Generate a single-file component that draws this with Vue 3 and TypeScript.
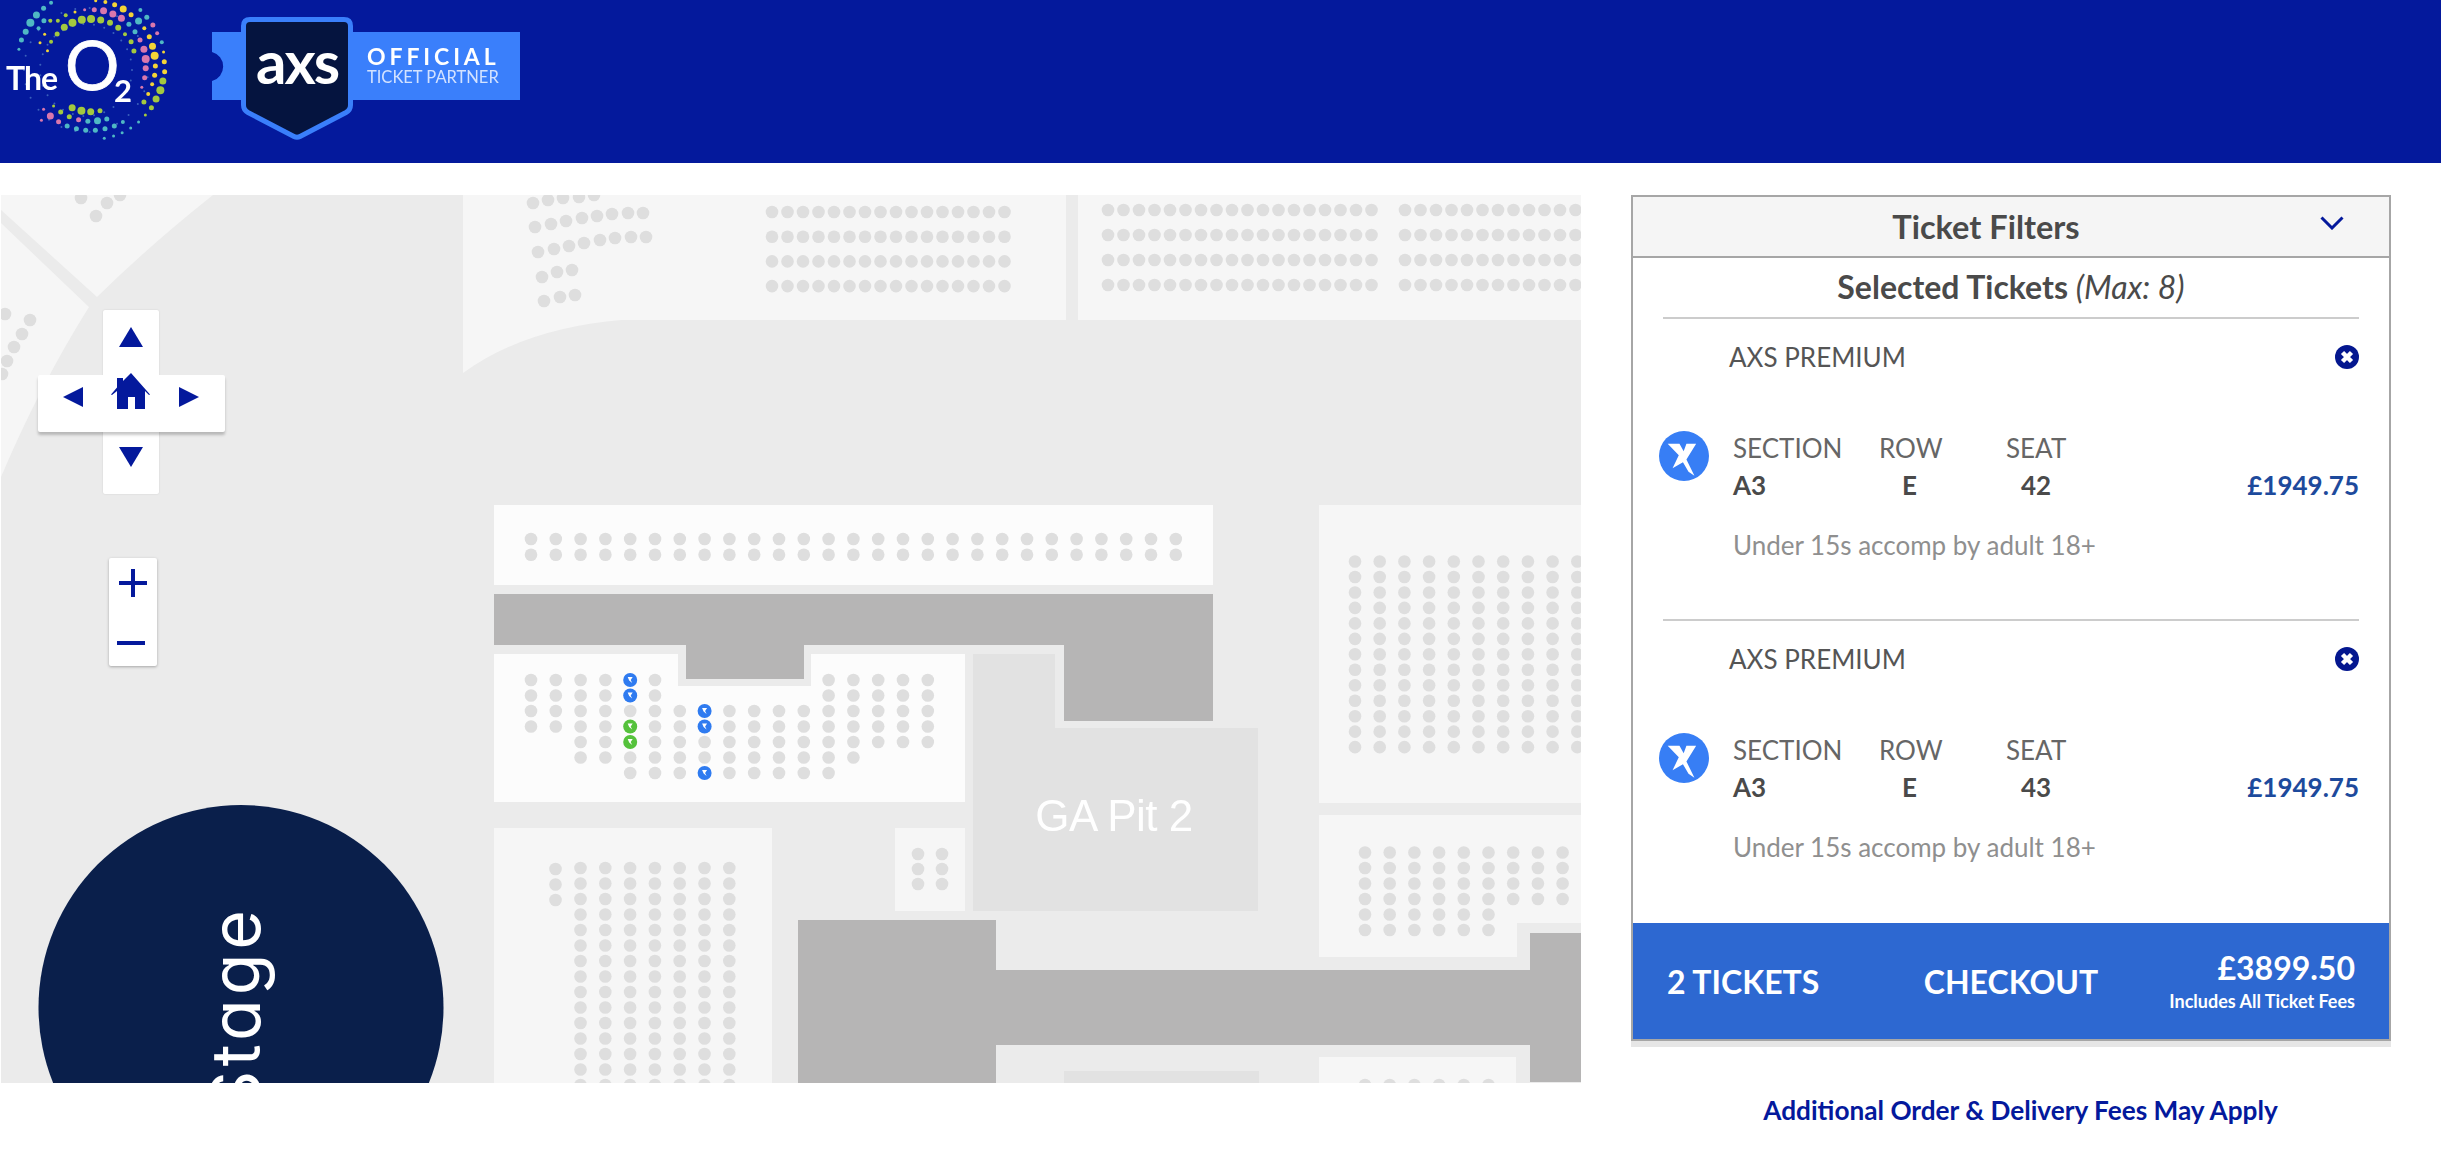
<template>
  <div class="page">
    <header class="topbar">
      <svg class="logo-o2" width="175" height="163" viewBox="0 0 175 163">
        <circle v-for="(d, i) in faintDots" :key="'f' + i" :cx="d.x" :cy="d.y" r="1" fill="#5f8fd0" opacity="0.6" />
        <circle v-for="(d, i) in logoDots" :key="i" :cx="d.x" :cy="d.y" :r="d.r" :fill="d.color" />
        <text x="6" y="90" class="o2-the">The</text>
        <text x="65" y="90" class="o2-big">O</text>
        <text x="114" y="102" class="o2-sub">2</text>
      </svg>
      <svg class="logo-axs" width="320" height="163" viewBox="205 0 320 163">
        <path d="M212 32H520V100H212V81A15 15 0 0 0 212 52Z" fill="#3a7ffb" />
        <path d="M250 19.500H344Q350.500 19.500 350.500 26V105Q350.500 110 346 112.500L300 136.500Q297 138 294 136.500L248 112.500Q243.500 110 243.500 105V26Q243.500 19.500 250 19.500Z" fill="#05143f" stroke="#3a7ffb" stroke-width="5" />
        <text x="256" y="84" class="axs-word">axs</text>
        <text x="367" y="65" class="axs-official">OFFICIAL</text>
        <text x="367" y="83" class="axs-partner">TICKET PARTNER</text>
      </svg>
    </header>

    <main class="content">
      <section class="map">
        <svg class="map-canvas" width="1581" height="888" viewBox="1 195 1581 888">
          <rect x="1" y="195" width="1581" height="888" fill="#ebebeb" />

          <path d="M1 195H213Q150 245 97 297L1 210Z" fill="#f6f6f6" />
          <path d="M1 223L89 307Q40 385 1 477Z" fill="#f6f6f6" />
          <path d="M463 195H1066V320H622Q525 328 463 373Z" fill="#f6f6f6" />
          <rect x="1078" y="195" width="504" height="125" fill="#f6f6f6" />
          <rect x="494" y="505" width="719" height="80" fill="#fcfcfc" />
          <path d="M494 654H678V686H811V654H965V802H494Z" fill="#fcfcfc" />
          <rect x="494" y="828" width="278" height="255" fill="#f6f6f6" />
          <rect x="895" y="828" width="70" height="83" fill="#f6f6f6" />
          <rect x="1319" y="505" width="263" height="298" fill="#f6f6f6" />
          <path d="M1319 815H1582V923H1517V957H1319Z" fill="#f6f6f6" />
          <rect x="1319" y="1057" width="197" height="26" fill="#f6f6f6" />

          <path d="M973 654H1055V728H1258V911H973Z" fill="#e2e2e2" />
          <rect x="1064" y="1071" width="195" height="12" fill="#e2e2e2" />

          <path d="M494 594H1213V721H1064V645H804V679H686V645H494Z" fill="#b6b5b5" />
          <path d="M798 920H996V970H1530V933H1582V1082H1530V1045H996V1083H798Z" fill="#b6b5b5" />

          <g class="soft">
            <circle v-for="(s, i) in seats" :key="i" :cx="s.x" :cy="s.y" r="6.300" fill="#dedede" />
            <g v-for="(s, i) in markedSeats" :key="'m' + i">
              <circle :cx="s.x" :cy="s.y" r="7" :fill="s.color" />
              <path :d="`M${s.x - 2.500} ${s.y - 3}h5l-2 3 1.500 3-3-2.500z`" fill="#fff" />
            </g>
            <text x="1114" y="831" text-anchor="middle" class="ga-label">GA Pit 2</text>
          </g>

          <circle cx="241" cy="1007.500" r="202.500" fill="#0a1f4b" />
          <text transform="translate(260 906) rotate(-90)" text-anchor="end" class="stage-label">Stage</text>
        </svg>

        <div class="nav-pad">
          <div class="arm-v"></div>
          <div class="arm-h"></div>
          <svg class="nav-icons" width="187" height="184" viewBox="38 310 187 184">
            <path d="M131 327L143 347H119Z" />
            <path d="M131 467L119 447H143Z" />
            <path d="M63 397L83 387V407Z" />
            <path d="M199 397L179 387V407Z" />
            <path d="M131 373L150 394.500L149 395L145 391V409H135V397H128V409H117V391L112 395L111 394.500L117 387.500V378H123V381Z" />
          </svg>
        </div>

        <div class="zoom-box">
          <svg width="48" height="108" viewBox="109 558 48 108">
            <path d="M131 569h4v12h12v4h-12v12h-4v-12h-12v-4h12z" />
            <rect x="117" y="641" width="28" height="4" />
          </svg>
        </div>
      </section>

      <aside class="side">
        <div class="panel">
          <div class="filters">
            <span>Ticket Filters</span>
            <svg class="chevron" width="24" height="14" viewBox="0 0 24 14">
              <path d="M1.500 1.500L12 12L22.500 1.500" fill="none" stroke="#04199c" stroke-width="3" />
            </svg>
          </div>
          <h2 class="selected-title">Selected Tickets <em>(Max: 8)</em></h2>

          <div v-for="t in tickets" :key="t.seat" class="ticket">
            <div class="ticket-top">
              <span class="ticket-type">AXS PREMIUM</span>
              <svg width="24" height="24" viewBox="0 0 24 24">
                <circle cx="12" cy="12" r="12" fill="#04178f" />
                <path d="M7.500 7.500L16.500 16.500M16.500 7.500L7.500 16.500" stroke="#fff" stroke-width="4.500" />
              </svg>
            </div>
            <div class="ticket-body">
              <svg class="axs-mark" width="50" height="50" viewBox="33 18 144 144">
                <circle cx="105" cy="90" r="72" fill="#377ef5" />
                <path d="M58 55H92L104 76L112 55H140L112 100L135 147L118 135L102 108L72 125L90 88Z" fill="#fff" />
              </svg>
              <div class="col col-section">
                <span class="col-label">SECTION</span>
                <strong>{{ t.section }}</strong>
              </div>
              <div class="col col-row">
                <span class="col-label">ROW</span>
                <strong>{{ t.row }}</strong>
              </div>
              <div class="col col-seat">
                <span class="col-label">SEAT</span>
                <strong>{{ t.seat }}</strong>
              </div>
              <div class="price">{{ t.price }}</div>
            </div>
            <p class="ticket-note">Under 15s accomp by adult 18+</p>
          </div>

          <div class="checkout">
            <span class="checkout-count">2 TICKETS</span>
            <span class="checkout-label">CHECKOUT</span>
            <div class="checkout-total">
              <span class="total-price">£3899.50</span>
              <span class="total-note">Includes All Ticket Fees</span>
            </div>
          </div>
        </div>
        <p class="fees-note">Additional Order &amp; Delivery Fees May Apply</p>
      </aside>
    </main>
  </div>
</template>

<script setup lang="ts">
interface Seat {
  x: number;
  y: number;
}

const tickets = [
  { section: 'A3', row: 'E', seat: '42', price: '£1949.75' },
  { section: 'A3', row: 'E', seat: '43', price: '£1949.75' },
];

const BLUE = '#2f7bf0';
const GREEN = '#55c23c';

const grid = (x0: number, y0: number, dx: number, dy: number, cols: number, rows: number): Seat[] => {
  const out: Seat[] = [];
  for (let r = 0; r < rows; r++) {
    for (let c = 0; c < cols; c++) {
      out.push({ x: x0 + c * dx, y: y0 + r * dy });
    }
  }
  return out;
};

// centre block has rows of uneven length: [first col, last col] per row
const centreRows: [number, number][][] = [
  [[0, 5], [12, 16]],
  [[0, 5], [12, 16]],
  [[0, 16]],
  [[0, 16]],
  [[2, 16]],
  [[2, 13]],
  [[4, 12]],
];
const centreMarked: Record<string, string> = {
  '0-4': BLUE,
  '1-4': BLUE,
  '2-7': BLUE,
  '3-7': BLUE,
  '3-4': GREEN,
  '4-4': GREEN,
  '6-7': BLUE,
};

const seats: Seat[] = [
  // curved rows, upper left
  ...([
    [533, 203], [548, 200], [563, 198], [579, 197], [594, 195],
    [535, 227], [551, 224], [566, 221], [582, 218], [597, 216], [612, 214], [628, 213], [643, 213],
    [538, 252], [554, 249], [569, 246], [584, 243], [600, 240], [615, 238], [631, 237], [646, 237],
    [542, 277], [557, 272], [572, 270],
    [544, 301], [560, 297], [575, 295],
    [81, 198], [107, 203], [96, 216], [120, 195],
    [5, 314], [30, 320], [22, 334], [14, 347], [7, 361], [2, 374],
  ].map(([x, y]) => ({ x, y }))),
  ...grid(772, 212, 15.5, 24.7, 16, 4),
  ...grid(1108, 210, 15.5, 25, 18, 4),
  ...grid(1405, 210, 15.5, 25, 12, 4),
  ...grid(531, 539, 24.8, 15.7, 27, 2),
  ...grid(555.500, 869, 24.800, 15.500, 1, 3),
  ...grid(580.500, 868, 24.800, 15.500, 7, 15),
  ...grid(918, 854, 24, 15, 2, 3),
  ...grid(1355, 561.500, 24.700, 15.470, 10, 13),
  ...grid(1365, 852.500, 24.700, 15.500, 9, 4),
  ...grid(1365, 914.500, 24.700, 15.500, 6, 2),
  ...grid(1365, 1085, 24.700, 15.500, 6, 1),
];

const markedSeats: (Seat & { color: string })[] = [];
centreRows.forEach((spans, r) => {
  spans.forEach(([from, to]) => {
    for (let c = from; c <= to; c++) {
      const x = 531 + c * 24.8;
      const y = 680 + r * 15.5;
      const color = centreMarked[`${r}-${c}`];
      if (color) markedSeats.push({ x, y, color });
      else seats.push({ x, y });
    }
  });
});

const TEAL = '#4fb8c4';
const LIME = '#a3c93f';
const PINK = '#d977ad';
const YELLOW = '#f3d437';

// measured off the 2.8 x 3 crop of the logo, hence the scaling below
const rawDots: [number, number, number, string][] = [
  [85, 68, 4, TEAL], [102, 45, 3.500, TEAL], [72, 95, 3, TEAL], [60, 120, 2.500, TEAL], [122, 25, 2.500, TEAL],
  [143, 8, 2, TEAL], [123, 62, 2.500, TEAL], [108, 85, 2, TEAL], [53, 148, 1.500, TEAL],
  [203, 68, 4, LIME], [229, 59, 4, LIME], [255, 57, 4, LIME], [282, 60, 3.500, LIME], [308, 68, 3, LIME],
  [331, 83, 3, LIME], [180, 82, 3.500, LIME], [160, 102, 2.500, LIME], [143, 125, 2, LIME], [141, 62, 2, LIME],
  [162, 62, 2, LIME], [184, 46, 2, LIME], [125, 103, 1.500, YELLOW], [112, 128, 1.500, YELLOW], [133, 152, 1.500, YELLOW],
  [264, 29, 2.500, PINK], [290, 32, 3.500, PINK], [316, 42, 3.500, PINK], [340, 55, 3.500, PINK],
  [237, 29, 1.500, PINK], [210, 36, 1.500, YELLOW],
  [295, 6, 2, YELLOW], [321, 14, 2.500, YELLOW], [345, 27, 3.500, YELLOW], [367, 44, 2.500, YELLOW], [268, 2, 1.500, YELLOW],
  [393, 30, 2, TEAL], [411, 52, 2.500, TEAL], [388, 63, 3.500, TEAL], [361, 73, 2.500, TEAL], [378, 95, 2.500, TEAL],
  [428, 75, 2.500, PINK], [440, 100, 2, PINK], [404, 85, 2, YELLOW], [350, 103, 2, LIME], [367, 125, 2.500, LIME],
  [375, 153, 2.500, LIME], [418, 110, 2.500, YELLOW], [392, 120, 2.500, PINK], [453, 127, 2, TEAL],
  [427, 139, 3.500, YELLOW], [403, 148, 3.500, PINK], [458, 156, 1.500, YELLOW], [433, 167, 4, YELLOW], [408, 177, 4, PINK],
  [460, 185, 2.500, YELLOW], [435, 198, 2.500, YELLOW], [408, 205, 3, PINK], [461, 215, 2.500, YELLOW], [433, 226, 2.500, YELLOW],
  [405, 233, 2.500, PINK], [456, 243, 3.500, LIME], [426, 253, 2, YELLOW], [397, 262, 1.500, PINK], [449, 271, 4, LIME],
  [415, 282, 2, YELLOW], [437, 297, 3.500, LIME], [403, 306, 2.500, LIME], [424, 323, 2.500, LIME], [407, 345, 1.500, LIME],
  [202, 323, 3.500, LIME], [228, 332, 4, LIME], [254, 335, 3.500, LIME], [280, 332, 2.500, LIME], [170, 336, 2.500, LIME],
  [150, 318, 1.500, LIME], [122, 328, 1.500, PINK], [141, 348, 3.500, PINK], [194, 350, 2.500, LIME], [220, 359, 2.500, PINK],
  [116, 361, 1.500, PINK], [164, 365, 2.500, PINK], [246, 364, 2.500, TEAL], [273, 362, 3.500, TEAL], [299, 357, 2.500, TEAL],
  [188, 378, 2.500, TEAL], [214, 386, 2.500, TEAL], [240, 391, 2.500, TEAL], [267, 391, 2.500, TEAL], [294, 386, 2.500, TEAL],
  [320, 378, 2.500, TEAL], [344, 366, 2, TEAL], [366, 384, 1.500, TEAL], [388, 366, 1.500, TEAL], [342, 398, 1.500, TEAL],
  [318, 408, 1.500, TEAL], [292, 415, 1.500, TEAL],
];

const logoDots = rawDots.map(([x, y, r, color]) => ({ x: x / 2.8, y: y / 3, r, color }));

// thin scatter of tiny dots between the coloured rings
const faintDots = Array.from({ length: 54 }, (_, i) => {
  const angle = (i / 54) * Math.PI * 2;
  const radius = i % 2 ? 62 : 46;
  return { x: 86 + Math.cos(angle) * radius, y: 70 + Math.sin(angle) * radius };
});
</script>

<style>
html,
body {
  margin: 0;
  background: #fff;
}
</style>

<style scoped>
.page {
  width: 2441px;
  height: 1157px;
  overflow: hidden;
  font-family: Lato, "Open Sans", sans-serif;
  color: #4a4a4a;
}

.topbar {
  display: flex;
  height: 163px;
  background: #04199c;
  overflow: hidden;
}

.logo-o2 {
  flex: none;
  filter: blur(0.5px);
}
.logo-axs {
  flex: none;
  margin-left: 30px;
  filter: blur(0.4px);
}
.o2-the {
  font: 700 32px Lato, sans-serif;
  fill: #fff;
  letter-spacing: -1px;
}
.o2-big {
  font: 400 68px Lato, sans-serif;
  fill: #fff;
  stroke: #fff;
  stroke-width: 0.8px;
}
.o2-sub {
  font: 700 31px Lato, sans-serif;
  fill: #fff;
}
.axs-word {
  font: 700 60px Lato, sans-serif;
  fill: #fff;
  letter-spacing: -2px;
}
.axs-official {
  font: 700 23px Lato, sans-serif;
  fill: #fff;
  letter-spacing: 3.900px;
}
.axs-partner {
  font: 400 16.500px Lato, sans-serif;
  fill: #d3e2ff;
}

.content {
  display: flex;
  margin-top: 32px;
  padding-left: 1px;
}

.map {
  position: relative;
  flex: none;
  width: 1580px;
  height: 888px;
  overflow: hidden;
}
.map-canvas {
  display: block;
}
.soft {
  filter: blur(0.5px);
}
.ga-label {
  font: 400 44px "Liberation Sans", Arial, sans-serif;
  fill: #fff;
  letter-spacing: -0.500px;
}
.stage-label {
  font: 400 68px Inter, sans-serif;
  font-feature-settings: "cv11";
  letter-spacing: 4px;
  fill: #fff;
}

.nav-pad {
  position: absolute;
  left: 37px;
  top: 115px;
  width: 187px;
  height: 184px;
}
.arm-v,
.arm-h {
  position: absolute;
  background: #fff;
  border-radius: 2px;
  box-shadow: 0 3px 3px rgba(0, 0, 0, 0.22);
}
.arm-v {
  left: 65px;
  top: 0;
  width: 56px;
  height: 184px;
  box-shadow: 0 0 2px rgba(0, 0, 0, 0.12);
}
.arm-h {
  left: 0;
  top: 65px;
  width: 187px;
  height: 57px;
}
.nav-icons {
  position: absolute;
  left: 0;
  top: 0;
  fill: #04199c;
}

.zoom-box {
  position: absolute;
  left: 108px;
  top: 363px;
  width: 48px;
  height: 108px;
  background: #fff;
  border-radius: 2px;
  box-shadow: 0 1px 3px rgba(0, 0, 0, 0.3);
}
.zoom-box svg {
  display: block;
  fill: #04199c;
}

.side {
  flex: none;
  width: 760px;
  margin-left: 50px;
}

.panel {
  border: 2px solid #a6a6a6;
  box-shadow: 0 6px 0 #e6e6e6;
}

.filters {
  position: relative;
  display: flex;
  align-items: center;
  justify-content: center;
  box-sizing: border-box;
  height: 61px;
  padding-right: 50px;
  background: #f5f5f5;
  border-bottom: 2px solid #a6a6a6;
  font-size: 32.500px;
  font-weight: 700;
  color: #4a4a4a;
}
.chevron {
  position: absolute;
  right: 45px;
  top: 19px;
}

.selected-title {
  margin: 0;
  height: 59px;
  line-height: 58px;
  text-align: center;
  font-size: 32px;
  font-weight: 700;
  color: #4a4a4a;
}
.selected-title em {
  font-weight: 400;
}

.ticket {
  box-sizing: border-box;
  height: 302px;
  margin: 0 30px;
  padding-top: 26px;
  border-top: 2px solid #cccccc;
}

.ticket-top {
  display: flex;
  align-items: center;
  justify-content: space-between;
  height: 24px;
  padding-left: 66px;
}
.ticket-type {
  font-size: 26px;
  color: #555;
}

.ticket-body {
  display: flex;
  align-items: flex-start;
  margin-top: 60px;
  margin-left: -4px;
}
.axs-mark {
  flex: none;
  margin-top: 2px;
  margin-right: 24px;
}

.col {
  display: flex;
  flex-direction: column;
  flex: none;
  font-size: 26px;
  line-height: 38px;
}
.col-label {
  color: #666;
}
.col strong {
  margin-top: -1px;
  font-weight: 700;
  color: #4a4a4a;
}
.col-section {
  width: 146px;
}
.col-row {
  width: 61px;
  margin-right: 66px;
  text-align: center;
}
.col-seat {
  width: 60px;
  text-align: center;
}

.price {
  margin-left: auto;
  margin-top: 37px;
  line-height: 38px;
  font-size: 26px;
  font-weight: 700;
  color: #1d4a9c;
}

.ticket-note {
  margin: 22px 0 0 70px;
  line-height: 38px;
  font-size: 26px;
  color: #8f8f8f;
}

.checkout {
  display: flex;
  position: relative;
  align-items: center;
  justify-content: space-between;
  box-sizing: border-box;
  height: 116px;
  margin-top: 2px;
  padding: 0 34px 0 34px;
  background: #2d68d1;
  color: #fff;
  font-weight: 700;
}
.checkout-count,
.checkout-label {
  font-size: 32px;
}
.checkout-label {
  position: absolute;
  left: 0;
  right: 0;
  text-align: center;
}
.checkout-total {
  display: flex;
  flex-direction: column;
  align-items: flex-end;
  margin-left: auto;
}
.total-price {
  font-size: 32px;
  line-height: 40px;
}
.total-note {
  font-size: 18px;
  line-height: 26px;
}

.fees-note {
  margin: 53px 0 0;
  padding-left: 19px;
  text-align: center;
  font-size: 26.200px;
  line-height: 32px;
  font-weight: 700;
  color: #04199c;
}
</style>
